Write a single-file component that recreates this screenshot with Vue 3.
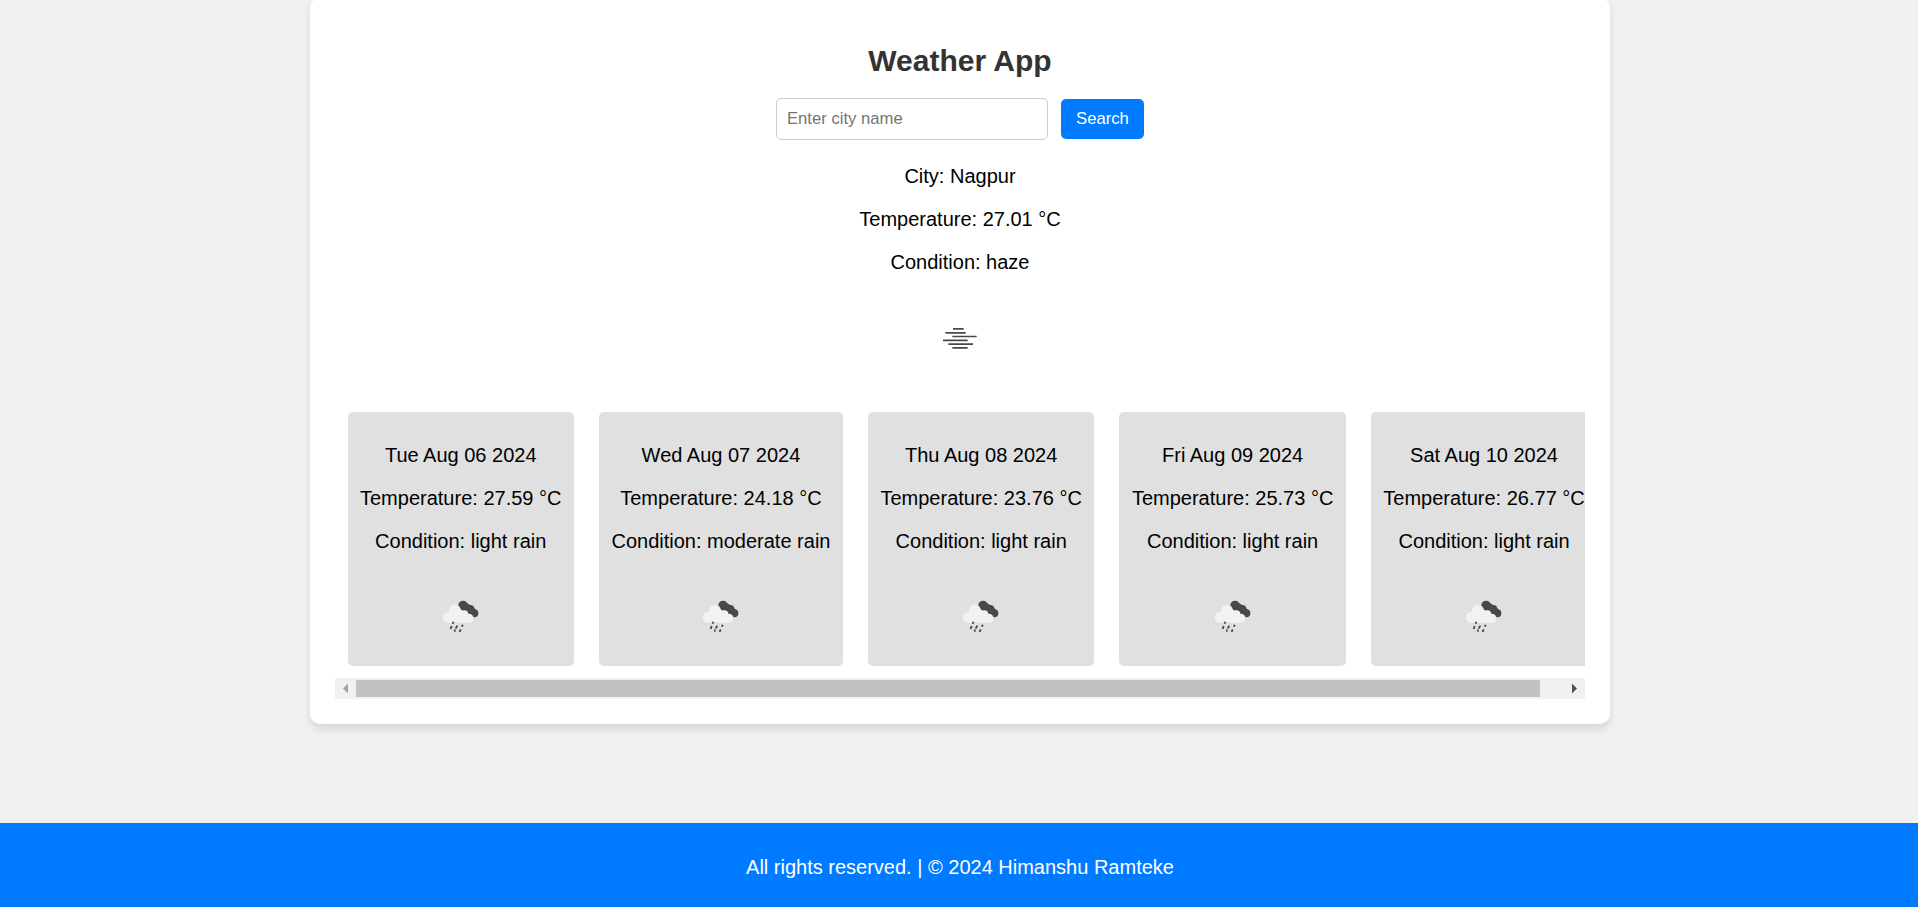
<script setup>
const days = [
  { date: 'Tue Aug 06 2024', temp: '27.59', condition: 'light rain' },
  { date: 'Wed Aug 07 2024', temp: '24.18', condition: 'moderate rain' },
  { date: 'Thu Aug 08 2024', temp: '23.76', condition: 'light rain' },
  { date: 'Fri Aug 09 2024', temp: '25.73', condition: 'light rain' },
  { date: 'Sat Aug 10 2024', temp: '26.77', condition: 'light rain' }
]
</script>

<template>
  <div class="page">
    <main class="container">
      <h1>Weather App</h1>
      <div class="search">
        <input type="text" placeholder="Enter city name" />
        <button type="button">Search</button>
      </div>
      <section class="current">
        <p>City: Nagpur</p>
        <p>Temperature: 27.01 °C</p>
        <p>Condition: haze</p>
        <svg class="haze" width="60" height="60" viewBox="0 0 180 180" fill="none" stroke="#48484a" stroke-width="5.2">
          <path d="M69 56.5H101M46 68.5H107M67 79.5H140M39 91H113M55 102.5H129M67 113.5H113" />
        </svg>
      </section>
      <section class="forecast">
        <article v-for="day in days" :key="day.date" class="day">
          <p>{{ day.date }}</p>
          <p>Temperature: {{ day.temp }} °C</p>
          <p>Condition: {{ day.condition }}</p>
          <svg class="rain" width="60" height="55" viewBox="3 0 180 165">
            <g fill="#48484a">
              <circle cx="99" cy="61" r="14" />
              <circle cx="121" cy="72" r="12" />
              <circle cx="133" cy="85" r="12" />
              <path d="M88 70L106 51L125 63L142 78L126 96Z" />
            </g>
            <g fill="#f2f2f0">
              <circle cx="75" cy="77" r="18" />
              <circle cx="55" cy="97" r="16.5" />
              <circle cx="103" cy="88" r="12" />
              <circle cx="117" cy="100" r="13.5" />
              <path d="M55 80H94L117 90V113.5H55Z" />
            </g>
            <path
              d="M70 110L68 116M65 123L62 132M82 122L77 131M98 119L96 125M75 134L74 140M92 133L89 141"
              fill="none" stroke="#48484a" stroke-width="5.5"
            />
          </svg>
        </article>
      </section>
      <div class="scrollbar">
        <svg class="arrow" width="21" height="21" viewBox="0 0 21 21"><path d="M13 5.5V15.5L8 10.5Z" fill="#a3a3a3" /></svg>
        <div class="track"><div class="thumb"></div></div>
        <svg class="arrow" width="21" height="21" viewBox="0 0 21 21"><path d="M8 5.5V15.5L13 10.5Z" fill="#505050" /></svg>
      </div>
    </main>
    <footer>All rights reserved. | © 2024 Himanshu Ramteke</footer>
  </div>
</template>

<style>
html,
body {
  margin: 0;
  overflow: hidden;
  background: #f0f0f0;
}
</style>

<style scoped>
.page {
  display: flex;
  flex-direction: column;
  align-items: center;
  width: 1920px;
  height: 907px;
  overflow: hidden;
  font: 20px/23px Arial, "Liberation Sans", sans-serif;
  color: #000;
  text-align: center;
}
.container {
  flex: none;
  box-sizing: border-box;
  width: 1300px;
  height: 726px;
  margin-top: -2px;
  padding: 45px 25px 25px;
  background: #fff;
  border-radius: 10px;
  box-shadow: 0 5px 7.5px rgba(0, 0, 0, 0.1);
}
h1 {
  margin: 0;
  font-size: 30px;
  line-height: 35px;
  color: #333;
}
.search {
  display: flex;
  justify-content: center;
  align-items: center;
  gap: 13px;
  height: 42px;
  margin-top: 20px;
}
input,
button {
  box-sizing: border-box;
  font-family: inherit;
  font-size: 16.67px;
  border-radius: 5px;
}
input {
  width: 272px;
  height: 42px;
  padding: 0 10px;
  border: 1px solid #ccc;
  background: #fff;
}
input::placeholder {
  color: #757575;
}
button {
  width: 83px;
  height: 40px;
  padding: 0;
  border: none;
  background: #007bff;
  color: #fff;
}
.current {
  height: 234px;
  margin-top: 25px;
}
p {
  margin: 0 0 20px;
  white-space: nowrap;
}
.haze {
  display: block;
  margin: 36px auto 0;
}
.forecast {
  display: flex;
  gap: 25px;
  height: 254px;
  margin-top: 13px;
  padding-left: 12.5px;
  overflow: hidden;
}
.day {
  flex: none;
  box-sizing: border-box;
  height: 254px;
  padding: 32px 12.5px 0;
  background: #e0e0e0;
  border-radius: 5px;
}
.rain {
  display: block;
  margin: 32px auto 0;
}
.scrollbar {
  display: flex;
  align-items: center;
  height: 21px;
  margin-top: 12px;
  background: #f1f1f1;
}
.arrow {
  flex: none;
}
.track {
  flex: 1;
}
.thumb {
  width: 1184px;
  height: 17px;
  background: #c1c1c1;
}
footer {
  flex: none;
  width: 100%;
  height: 84px;
  margin-top: 99px;
  line-height: 88px;
  background: #007bff;
  color: #fff;
}
</style>
